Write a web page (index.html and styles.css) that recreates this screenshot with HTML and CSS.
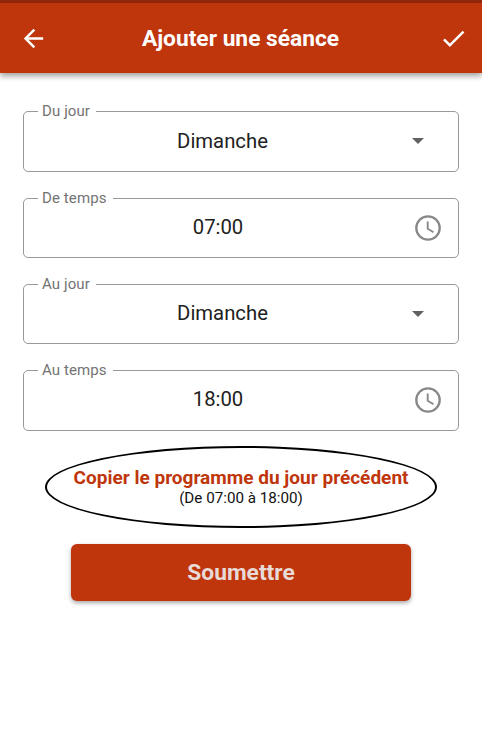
FILE: index.html
```html
<!DOCTYPE html>
<html lang="fr">
<head>
<meta charset="utf-8">
<title>Ajouter une séance</title>
<link rel="stylesheet" href="styles.css">
</head>
<body>
<header class="app-bar">
  <svg class="bar-icon" viewBox="0 0 24 24"><path d="M20 11H7.83l5.59-5.59L12 4l-8 8 8 8 1.41-1.41L7.83 13H20z"/></svg>
  <h1 class="title">Ajouter une séance</h1>
  <svg class="bar-icon" viewBox="0 0 24 24"><path d="M9 16.17 4.83 12l-1.42 1.41L9 19 21 7l-1.41-1.41z"/></svg>
</header>
<main class="form">
  <div class="field">
    <span class="label">Du jour</span>
    <span class="value">Dimanche</span>
    <svg class="caret" viewBox="0 0 12 6"><path d="M0 0h12L6 6z"/></svg>
  </div>
  <div class="field">
    <span class="label">De temps</span>
    <span class="value time">07:00</span>
    <svg class="clock" viewBox="0 0 26 26"><circle cx="13" cy="13" r="11.7"/><path d="M12.7 6.5v7.2l5.8 3.5" stroke-width="1.9"/></svg>
  </div>
  <div class="field">
    <span class="label">Au jour</span>
    <span class="value">Dimanche</span>
    <svg class="caret" viewBox="0 0 12 6"><path d="M0 0h12L6 6z"/></svg>
  </div>
  <div class="field">
    <span class="label">Au temps</span>
    <span class="value time">18:00</span>
    <svg class="clock" viewBox="0 0 26 26"><circle cx="13" cy="13" r="11.7"/><path d="M12.7 6.5v7.2l5.8 3.5" stroke-width="1.9"/></svg>
  </div>
  <div class="copy">
    <a class="copy-link">Copier le programme du jour précédent</a>
    <span class="copy-hours">(De 07:00 à 18:00)</span>
  </div>
  <button class="submit">Soumettre</button>
</main>
</body>
</html>
```
FILE: styles.css
```css
* { box-sizing: border-box; }
body {
  margin: 0;
  height: 735px;
  background: #fff;
  color: #212121;
  font-family: Roboto, "Liberation Sans", sans-serif;
  overflow: hidden;
}
.app-bar {
  display: flex;
  align-items: center;
  height: 73px;
  padding: 0 14px 0 19px;
  border-top: 3px solid #8f260b;
  background: #bf360c;
  box-shadow: 0 3px 6px rgba(0, 0, 0, .38);
}
.bar-icon {
  flex: none;
  width: 29px;
  height: 29px;
  fill: #fff;
}
.title {
  flex: 1;
  margin: 0;
  padding: 2px 6px 0 0;
  color: #fff;
  font-size: 22.75px;
  font-weight: 700;
  line-height: 28px;
  text-align: center;
  white-space: nowrap;
}
.form {
  display: flex;
  flex-direction: column;
  align-items: center;
  padding: 38.4px 23px 0;
}
.field {
  position: relative;
  display: flex;
  align-items: center;
  width: 436px;
  height: 60.6px;
  margin-bottom: 25.6px;
  border: 1.4px solid #999;
  border-radius: 5px;
}
.label {
  position: absolute;
  top: -10px;
  left: 13.5px;
  padding: 0 6px 0 4.5px;
  background: #fff;
  color: #737373;
  font-size: 15px;
  line-height: 18px;
  letter-spacing: .1px;
}
.value {
  flex: 1;
  padding: 0 0 2px 31px;
  text-align: center;
  font-size: 20.3px;
  line-height: 24px;
}
.time { padding-left: 23px; }
.caret {
  width: 12px;
  height: 6px;
  margin: 0 34px 1px 22px;
  fill: #616161;
}
.clock {
  width: 26px;
  height: 26px;
  margin: 0 17px 0 26px;
  fill: none;
  stroke: #888;
  stroke-width: 2.3;
}
.copy {
  display: flex;
  flex-direction: column;
  align-items: center;
  width: 392px;
  height: 82px;
  margin-top: -10.2px;
  padding-top: 19px;
  border: 2px solid #000;
  border-radius: 50%;
  white-space: nowrap;
}
.copy-link {
  color: #bf360c;
  font-size: 19.05px;
  font-weight: 700;
  line-height: 21px;
}
.copy-hours {
  color: #111;
  font-size: 15.2px;
  line-height: 20px;
}
.submit {
  width: 340px;
  height: 57px;
  margin-top: 16px;
  padding: 1px 0 0;
  border: 0;
  border-radius: 6px;
  background: #bf360c;
  box-shadow: 0 2px 4px rgba(0, 0, 0, .35);
  color: #e8dbd7;
  font: 700 22.75px/28px Roboto, "Liberation Sans", sans-serif;
}
```
